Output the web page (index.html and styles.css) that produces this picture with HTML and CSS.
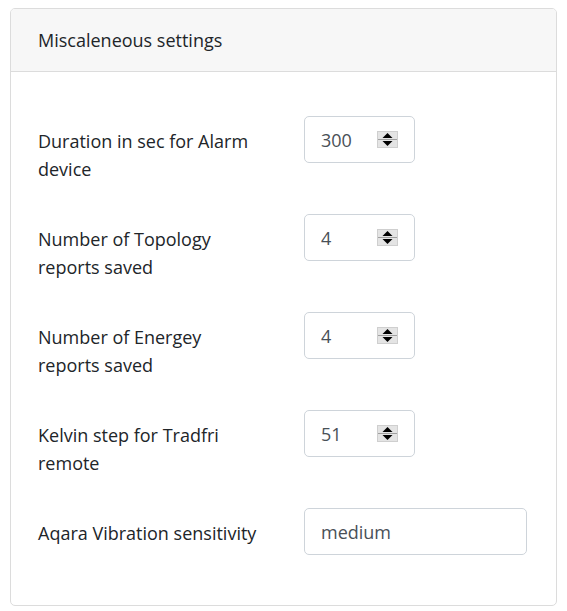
FILE: index.html
```html
<!DOCTYPE html>
<html lang="en">
<head>
    <meta charset="UTF-8">
    <meta name="viewport" content="width=device-width, initial-scale=1.0">
    <title>Miscaleneous settings</title>
    <link rel="stylesheet" href="styles.css">
</head>
<body>
    <div class="card">
        <div class="card-header">Miscaleneous settings</div>
        <div class="card-body">
            <div class="form-row">
                <label class="form-label" for="alarm">Duration in sec for Alarm device</label>
                <div class="number-field">
                    <input type="number" id="alarm" value="300">
                    <svg class="spinner" width="21" height="17" viewBox="0 0 21 17">
                        <rect x="0.5" y="0.5" width="20" height="16" fill="#e4e4e4" stroke="#cfcfcf"/>
                        <line x1="1" y1="8.5" x2="20" y2="8.5" stroke="#a0a0a0"/>
                        <polygon points="10.5,2 15.5,7 5.5,7" fill="#000"/>
                        <polygon points="5.5,10 15.5,10 10.5,15" fill="#000"/>
                    </svg>
                </div>
            </div>
            <div class="form-row">
                <label class="form-label" for="topology">Number of Topology reports saved</label>
                <div class="number-field">
                    <input type="number" id="topology" value="4">
                    <svg class="spinner" width="21" height="17" viewBox="0 0 21 17">
                        <rect x="0.5" y="0.5" width="20" height="16" fill="#e4e4e4" stroke="#cfcfcf"/>
                        <line x1="1" y1="8.5" x2="20" y2="8.5" stroke="#a0a0a0"/>
                        <polygon points="10.5,2 15.5,7 5.5,7" fill="#000"/>
                        <polygon points="5.5,10 15.5,10 10.5,15" fill="#000"/>
                    </svg>
                </div>
            </div>
            <div class="form-row">
                <label class="form-label" for="energy">Number of Energey reports saved</label>
                <div class="number-field">
                    <input type="number" id="energy" value="4">
                    <svg class="spinner" width="21" height="17" viewBox="0 0 21 17">
                        <rect x="0.5" y="0.5" width="20" height="16" fill="#e4e4e4" stroke="#cfcfcf"/>
                        <line x1="1" y1="8.5" x2="20" y2="8.5" stroke="#a0a0a0"/>
                        <polygon points="10.5,2 15.5,7 5.5,7" fill="#000"/>
                        <polygon points="5.5,10 15.5,10 10.5,15" fill="#000"/>
                    </svg>
                </div>
            </div>
            <div class="form-row">
                <label class="form-label" for="kelvin">Kelvin step for Tradfri remote</label>
                <div class="number-field">
                    <input type="number" id="kelvin" value="51">
                    <svg class="spinner" width="21" height="17" viewBox="0 0 21 17">
                        <rect x="0.5" y="0.5" width="20" height="16" fill="#e4e4e4" stroke="#cfcfcf"/>
                        <line x1="1" y1="8.5" x2="20" y2="8.5" stroke="#a0a0a0"/>
                        <polygon points="10.5,2 15.5,7 5.5,7" fill="#000"/>
                        <polygon points="5.5,10 15.5,10 10.5,15" fill="#000"/>
                    </svg>
                </div>
            </div>
            <div class="form-row">
                <label class="form-label" for="vibration">Aqara Vibration sensitivity</label>
                <input type="text" id="vibration" class="text-input" value="medium">
            </div>
        </div>
    </div>
</body>
</html>
```
FILE: styles.css
```css
/* Reset */
body, input, label, div {
    margin: 0;
    padding: 0;
    box-sizing: border-box;
}

body {
    font-family: "Open Sans", "Noto Sans", sans-serif;
    font-size: 18px;
    color: #212529;
    background-color: #fff;
    padding: 8px 10px;
}

.card {
    width: 547px;
    border: 1px solid #dcdcdc;
    border-radius: 5px;
    overflow: hidden;
}

.card-header {
    background-color: #f7f7f7;
    border-bottom: 1px solid #dcdcdc;
    height: 63px;
    padding: 0 27px;
    line-height: 62px;
}

.card-body {
    padding: 44px 27px 50px;
}

.form-row {
    display: grid;
    grid-template-columns: 226px 223px;
    column-gap: 40px;
    align-items: start;
    margin-bottom: 31px;
}

.form-row:last-child {
    margin-bottom: 0;
}

.form-label {
    line-height: 28px;
    padding-top: 11px;
}

.number-field {
    position: relative;
    width: 111px;
}

input {
    font-family: inherit;
    font-size: 18px;
    color: #495057;
    height: 47px;
    border: 1px solid #ced4da;
    border-radius: 5px;
    padding: 0 16px;
    background-color: #fff;
}

.number-field input {
    width: 111px;
    -moz-appearance: textfield;
}

.number-field input::-webkit-inner-spin-button,
.number-field input::-webkit-outer-spin-button {
    -webkit-appearance: none;
    margin: 0;
}

.spinner {
    position: absolute;
    right: 17px;
    top: 15px;
}

.text-input {
    width: 223px;
}
```
